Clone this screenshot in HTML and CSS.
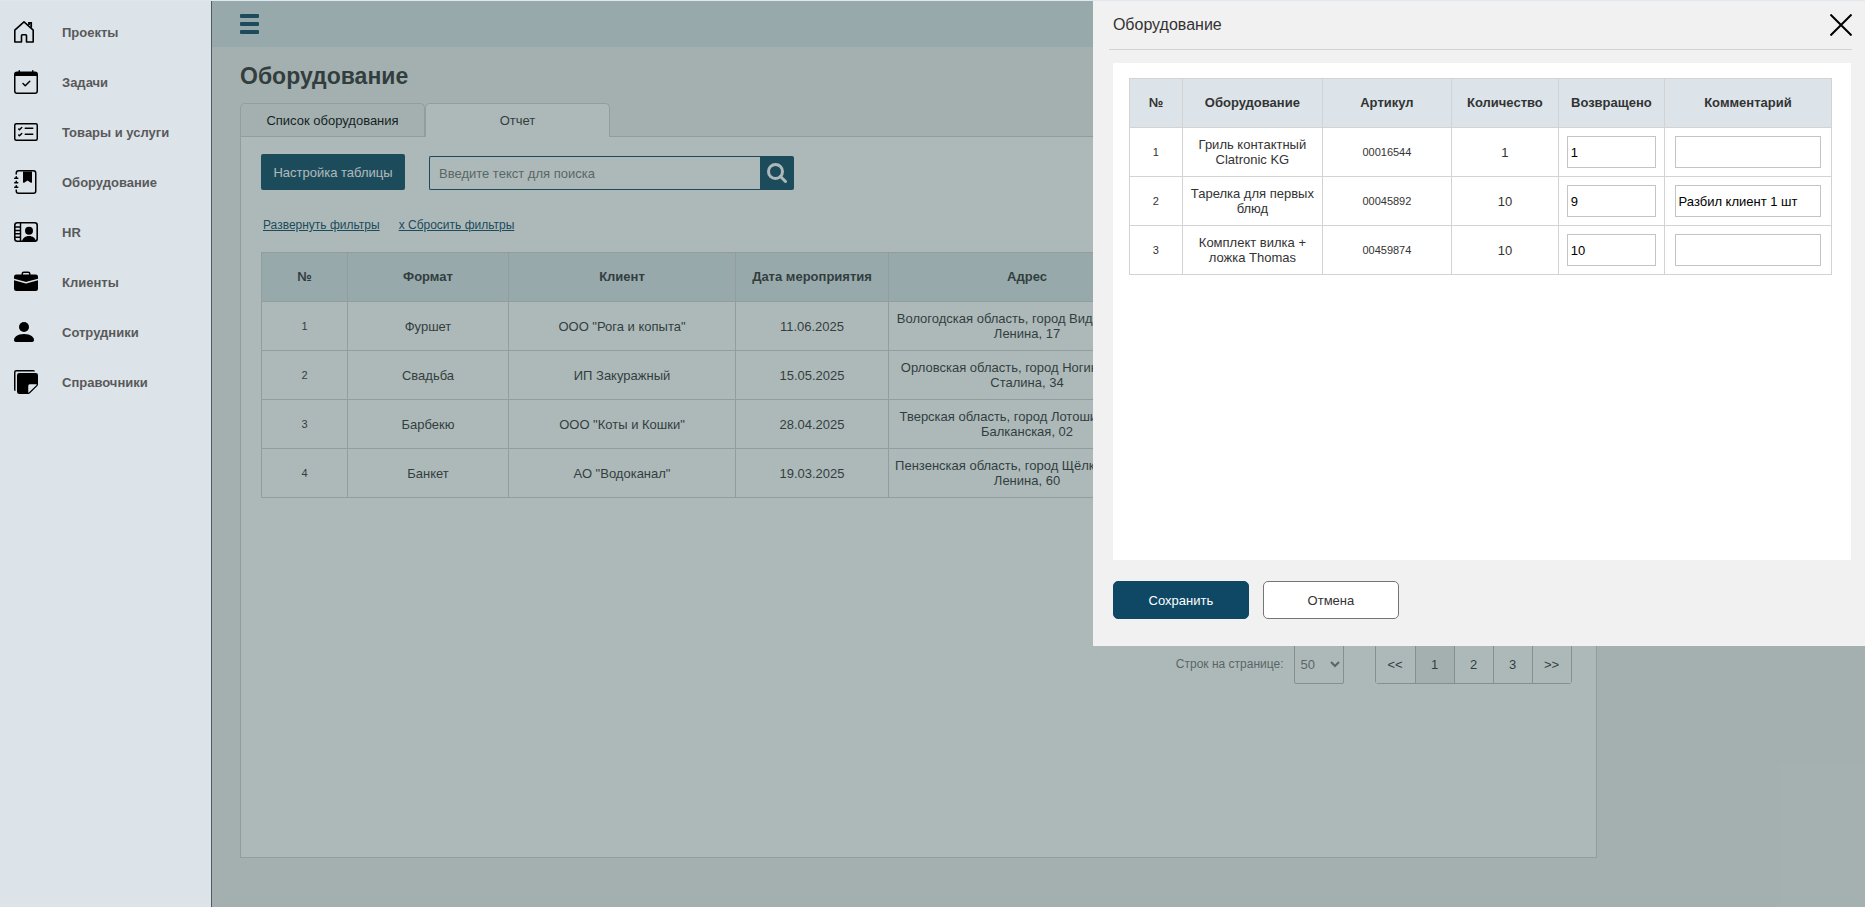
FILE: index.html
```html
<!DOCTYPE html>
<html lang="ru">
<head>
    <meta charset="UTF-8">
    <meta name="viewport" content="width=device-width, initial-scale=1.0">
    <title>Оборудование</title>
    <link rel="stylesheet" href="styles.css">
</head>
<body>
    <nav class="sidebar">
        <a href="#" class="menu-item">
            <svg class="icon" width="24" height="24" viewBox="0 0 24 24" fill="none" stroke="#000" stroke-width="1.6"><path d="M.8 10.2V22h6.7v-6.4c0-.5.3-.8.8-.8h3.4c.5 0 .8.3.8.8V22h6.7V10.2L10 1.8z" stroke-linejoin="round"/><path d="M15 5V2.8h2.2v5" stroke-width="1.8"/></svg>
            <span>Проекты</span>
        </a>
        <a href="#" class="menu-item">
            <svg class="icon" width="24" height="24" viewBox="0 0 16 16"><path d="M10.854 7.146a.5.5 0 0 1 0 .708l-3 3a.5.5 0 0 1-.708 0l-1.5-1.5a.5.5 0 1 1 .708-.708L7.5 9.793l2.646-2.647a.5.5 0 0 1 .708 0"/><path d="M3.5 0a.5.5 0 0 1 .5.5V1h8V.5a.5.5 0 0 1 1 0V1h1a2 2 0 0 1 2 2v11a2 2 0 0 1-2 2H2a2 2 0 0 1-2-2V3a2 2 0 0 1 2-2h1V.5a.5.5 0 0 1 .5-.5M1 4v10a1 1 0 0 0 1 1h12a1 1 0 0 0 1-1V4z"/></svg>
            <span>Задачи</span>
        </a>
        <a href="#" class="menu-item">
            <svg class="icon" width="24" height="24" viewBox="0 0 16 16"><path d="M14.5 3a.5.5 0 0 1 .5.5v9a.5.5 0 0 1-.5.5h-13a.5.5 0 0 1-.5-.5v-9a.5.5 0 0 1 .5-.5zm-13-1A1.500 1.500 0 0 0 0 3.500v9A1.500 1.500 0 0 0 1.500 14h13a1.500 1.500 0 0 0 1.500-1.500v-9A1.500 1.500 0 0 0 14.500 2z"/><path d="M7 5.500a.5.5 0 0 1 .5-.5h5a.5.5 0 0 1 0 1h-5a.5.5 0 0 1-.5-.5m-1.496-.854a.5.5 0 0 1 0 .708l-1.500 1.500a.5.5 0 0 1-.708 0l-.5-.5a.5.5 0 1 1 .708-.708l.146.147 1.146-1.147a.5.5 0 0 1 .708 0M7 9.500a.5.5 0 0 1 .5-.5h5a.5.5 0 0 1 0 1h-5a.5.5 0 0 1-.5-.5m-1.496-.854a.5.5 0 0 1 0 .708l-1.500 1.500a.5.5 0 0 1-.708 0l-.5-.5a.5.5 0 0 1 .708-.708l.146.147 1.146-1.147a.5.5 0 0 1 .708 0"/></svg>
            <span>Товары и услуги</span>
        </a>
        <a href="#" class="menu-item">
            <svg class="icon" width="24" height="24" viewBox="0 0 16 16"><path fill-rule="evenodd" d="M6 1h6v7a.5.5 0 0 1-.757.429L9 7.083 6.757 8.430A.5.5 0 0 1 6 8z"/><path d="M3 0h10a2 2 0 0 1 2 2v12a2 2 0 0 1-2 2H3a2 2 0 0 1-2-2v-1h1v1a1 1 0 0 0 1 1h10a1 1 0 0 0 1-1V2a1 1 0 0 0-1-1H3a1 1 0 0 0-1 1v1H1V2a2 2 0 0 1 2-2"/><path d="M1 5v-.5a.5.5 0 0 1 1 0V5h.5a.5.5 0 0 1 0 1h-2a.5.5 0 0 1 0-1zm0 3v-.5a.5.5 0 0 1 1 0V8h.5a.5.5 0 0 1 0 1h-2a.5.5 0 0 1 0-1zm0 3v-.5a.5.5 0 0 1 1 0v.5h.5a.5.5 0 0 1 0 1h-2a.5.5 0 0 1 0-1z"/></svg>
            <span>Оборудование</span>
        </a>
        <a href="#" class="menu-item">
            <svg class="icon" width="24" height="24" viewBox="0 0 24 24"><rect x=".8" y="2.8" width="22.400" height="18.400" rx="2.500" fill="none" stroke="#000" stroke-width="1.600"/><path d="M6.500 3v18M1 7h5.500M1 10.400h5.500M1 13.800h5.500M1 17.200h5.500" fill="none" stroke="#000" stroke-width="1.500"/><circle cx="15" cy="10.800" r="4"/><path d="M8 21.500c.5-3.300 3.200-5.500 7-5.500s6.500 2.200 7 5.500z"/></svg>
            <span>HR</span>
        </a>
        <a href="#" class="menu-item">
            <svg class="icon" width="24" height="24" viewBox="0 0 16 16"><path d="M6.500 1A1.500 1.500 0 0 0 5 2.500V3H1.500A1.500 1.500 0 0 0 0 4.500v1.384l7.614 2.030a1.500 1.500 0 0 0 .772 0L16 5.884V4.500A1.500 1.500 0 0 0 14.500 3H11v-.5A1.500 1.500 0 0 0 9.500 1zm0 1h3a.5.5 0 0 1 .5.5V3H6v-.5a.5.5 0 0 1 .5-.5"/><path d="M0 12.500A1.500 1.500 0 0 0 1.500 14h13a1.500 1.500 0 0 0 1.500-1.500V6.850L8.129 8.950a.5.5 0 0 1-.258 0L0 6.850z"/></svg>
            <span>Клиенты</span>
        </a>
        <a href="#" class="menu-item">
            <svg class="icon" width="24" height="24" viewBox="0 0 24 24"><circle cx="10" cy="7" r="5"/><path d="M2 22c-1.300 0-2-.7-2-2 0-2.600 3-6 10-6s10 3.400 10 6c0 1.300-.7 2-2 2z"/></svg>
            <span>Сотрудники</span>
        </a>
        <a href="#" class="menu-item">
            <svg class="icon" width="24" height="24" viewBox="0 0 16 16"><path d="M0 1.500V13a1 1 0 0 0 1 1V1.500a.5.5 0 0 1 .5-.5H14a1 1 0 0 0-1-1H1.500A1.500 1.500 0 0 0 0 1.500"/><path d="M3.500 2A1.500 1.500 0 0 0 2 3.500v11A1.500 1.500 0 0 0 3.500 16h6.086a1.500 1.500 0 0 0 1.060-.44l4.915-4.914A1.500 1.500 0 0 0 16 9.586V3.500A1.500 1.500 0 0 0 14.500 2zm6 8.500a1 1 0 0 1 1-1h4.396a.25.25 0 0 1 .177.427l-5.146 5.146a.25.25 0 0 1-.427-.177z"/></svg>
            <span>Справочники</span>
        </a>
    </nav>

    <div class="content">
        <header class="topbar">
            <button class="burger" aria-label="Меню"><i></i><i></i><i></i></button>
        </header>

        <main class="page">
            <h1>Оборудование</h1>
            <div class="tabs">
                <button class="tab">Список оборудования</button>
                <button class="tab active">Отчет</button>
            </div>
            <div class="panel">
                <div class="tools">
                    <button class="btn-settings">Настройка таблицы</button>
                    <form class="search">
                        <input type="text" placeholder="Введите текст для поиска" aria-label="Поиск">
                        <button type="button" aria-label="Найти">
                            <svg width="20" height="20" viewBox="0 0 20 20" fill="none" stroke="#fff"><circle cx="8.500" cy="8.500" r="7" stroke-width="3"/><path d="M13.500 13.500l5 5" stroke-width="3" stroke-linecap="round"/></svg>
                        </button>
                    </form>
                </div>
                <div class="filters">
                    <a href="#">Развернуть фильтры</a>
                    <a href="#">x Сбросить фильтры</a>
                </div>
                <table class="table report">
                    <colgroup>
                        <col class="r-num"><col class="r-format"><col class="r-client"><col class="r-date"><col class="r-address"><col>
                    </colgroup>
                    <thead>
                        <tr><th>№</th><th>Формат</th><th>Клиент</th><th>Дата мероприятия</th><th>Адрес</th><th></th></tr>
                    </thead>
                    <tbody>
                        <tr><td class="small">1</td><td>Фуршет</td><td>ООО "Рога и копыта"</td><td>11.06.2025</td><td>Вологодская область, город Видное, улица<br>Ленина, 17</td><td></td></tr>
                        <tr><td class="small">2</td><td>Свадьба</td><td>ИП Закуражный</td><td>15.05.2025</td><td>Орловская область, город Ногинск, улица<br>Сталина, 34</td><td></td></tr>
                        <tr><td class="small">3</td><td>Барбекю</td><td>ООО "Коты и Кошки"</td><td>28.04.2025</td><td>Тверская область, город Лотошино, улица<br>Балканская, 02</td><td></td></tr>
                        <tr><td class="small">4</td><td>Банкет</td><td>АО "Водоканал"</td><td>19.03.2025</td><td>Пензенская область, город Щёлково, улица<br>Ленина, 60</td><td></td></tr>
                    </tbody>
                </table>
                <div class="paging">
                    <label for="rows">Строк на странице:</label>
                    <select id="rows"><option>50</option><option>100</option></select>
                    <div class="pages">
                        <button>&lt;&lt;</button>
                        <button class="current">1</button>
                        <button>2</button>
                        <button>3</button>
                        <button>&gt;&gt;</button>
                    </div>
                </div>
            </div>
        </main>
        <div class="overlay"></div>
    </div>

    <section class="modal" role="dialog" aria-labelledby="modal-title">
        <div class="modal-header">
            <h2 id="modal-title">Оборудование</h2>
            <button class="close" aria-label="Закрыть">
                <svg width="22" height="22" viewBox="0 0 22 22" stroke="#000" stroke-width="2"><path d="M.5.5l21 21M21.500.5l-21 21"/></svg>
            </button>
        </div>
        <div class="modal-body">
            <table class="table">
                <colgroup>
                    <col class="m-num"><col class="m-name"><col class="m-code"><col class="m-count"><col class="m-back"><col>
                </colgroup>
                <thead>
                    <tr><th>№</th><th>Оборудование</th><th>Артикул</th><th>Количество</th><th>Возвращено</th><th>Комментарий</th></tr>
                </thead>
                <tbody>
                    <tr>
                        <td class="small">1</td><td>Гриль контактный Clatronic KG</td><td class="small">00016544</td><td>1</td>
                        <td><input type="text" value="1" aria-label="Возвращено"></td>
                        <td><input type="text" value="" aria-label="Комментарий"></td>
                    </tr>
                    <tr>
                        <td class="small">2</td><td>Тарелка для первых блюд</td><td class="small">00045892</td><td>10</td>
                        <td><input type="text" value="9" aria-label="Возвращено"></td>
                        <td><input type="text" value="Разбил клиент 1 шт" aria-label="Комментарий"></td>
                    </tr>
                    <tr>
                        <td class="small">3</td><td>Комплект вилка + ложка Thomas</td><td class="small">00459874</td><td>10</td>
                        <td><input type="text" value="10" aria-label="Возвращено"></td>
                        <td><input type="text" value="" aria-label="Комментарий"></td>
                    </tr>
                </tbody>
            </table>
        </div>
        <div class="modal-footer">
            <button class="btn save">Сохранить</button>
            <button class="btn cancel">Отмена</button>
        </div>
    </section>
</body>
</html>
```

FILE: styles.css
```css
* {
    box-sizing: border-box;
}
body {
    margin: 0;
    min-height: 100vh;
    display: flex;
    border-top: 1px solid #dfe7ef;
    background: #f1f1f1;
    color: #333;
    font-family: Arial, "Liberation Sans", sans-serif;
    font-size: 13px;
}
button, input, select {
    font-family: inherit;
    font-size: 13px;
    color: #333;
}
button {
    cursor: pointer;
    padding: 0;
}

/* боковое меню */
.sidebar {
    width: 212px;
    flex-shrink: 0;
    padding-top: 6px;
    background: #dce4ea;
    border-right: 1px solid #4f5b5d;
}
.menu-item {
    display: flex;
    align-items: center;
    gap: 24px;
    height: 50px;
    padding-left: 14px;
    color: #595959;
    font-weight: bold;
    text-decoration: none;
}
.icon {
    flex-shrink: 0;
}

/* основная часть */
.content {
    flex: 1;
    min-width: 0;
    position: relative;
}
.overlay {
    position: absolute;
    inset: 0;
    background: rgba(51, 80, 80, 0.4);
}
.topbar {
    display: flex;
    align-items: center;
    height: 46px;
    padding-left: 28px;
    background: #dce4ea;
}
.burger {
    display: grid;
    gap: 4px;
    width: 19px;
    background: none;
    border: none;
}
.burger i {
    height: 4px;
    background: #0e4865;
    border-radius: 1px;
}
.page {
    width: 84%;
    padding: 15px 4px 48px 28px;
}
h1 {
    margin: 0 0 13px;
    font-size: 23px;
    line-height: 28px;
}
.tabs {
    display: flex;
}
.tab {
    width: 185px;
    height: 33px;
    border: 1px solid #d3d3d3;
    border-bottom: none;
    border-radius: 5px 5px 0 0;
    background: #f1f1f1;
    color: #000;
}
.tab.active {
    position: relative;
    height: 34px;
    margin-bottom: -1px;
    background: #fff;
    color: #333;
}
.panel {
    min-height: 722px;
    padding: 17px 20px;
    background: #fff;
    border: 1px solid #d3d3d3;
}
.tools {
    display: flex;
    align-items: flex-end;
    gap: 24px;
}
.btn-settings {
    width: 144px;
    height: 36px;
    background: #0e4865;
    color: #fff;
    border: none;
    border-radius: 2px;
}
.search {
    display: flex;
}
.search input {
    width: 331px;
    height: 34px;
    padding: 0 9px;
    border: 1px solid #0e4865;
    border-right: none;
    border-radius: 2px 0 0 2px;
    background: #fff;
}
.search input::placeholder {
    color: #757575;
}
.search button {
    display: flex;
    align-items: center;
    justify-content: center;
    width: 34px;
    height: 34px;
    background: #0e4865;
    border: none;
    border-radius: 0 2px 2px 0;
}
.filters {
    display: flex;
    gap: 19px;
    padding: 27px 2px 19px;
    font-size: 12px;
    line-height: 16px;
}
.filters a {
    color: #0e4865;
}

/* таблицы */
.table {
    width: 100%;
    table-layout: fixed;
    border-collapse: collapse;
    text-align: center;
    line-height: 15px;
}
.table th, .table td {
    height: 49px;
    padding: 0 5px;
    border: 1px solid #d3d3d3;
}
.table th {
    padding-bottom: 1px;
    background: #dce4ea;
}
.table .small {
    font-size: 11px;
}
.r-num { width: 86px; }
.r-format { width: 161px; }
.r-client { width: 227px; }
.r-date { width: 153px; }
.r-address { width: 277px; }

.paging {
    display: flex;
    align-items: center;
    justify-content: flex-end;
    padding: 146px 4px 0;
    color: #757575;
    font-size: 12px;
}
.paging select {
    width: 50px;
    height: 40px;
    margin: 0 31px 0 10px;
    padding: 0 2px;
    background: #fff;
    color: #757575;
    border: 1px solid #bbb;
    border-radius: 2px;
}
.pages {
    display: flex;
    border: 1px solid #bbb;
    border-radius: 3px;
}
.pages button {
    width: 39px;
    height: 38px;
    background: #fff;
    border: none;
}
.pages button + button {
    border-left: 1px solid #bbb;
}
.pages .current {
    background: #f1f1f1;
}

/* модальное окно */
.modal {
    position: absolute;
    top: 1px;
    right: 0;
    width: 41.4%;
    padding: 0 13px 27px 16px;
    background: #f1f1f1;
}
.modal-header {
    display: flex;
    align-items: center;
    justify-content: space-between;
    height: 49px;
    padding-left: 4px;
    border-bottom: 1px solid #d3d3d3;
}
.modal-header h2 {
    margin: 0;
    font-size: 16px;
    font-weight: normal;
}
.close {
    display: flex;
    background: none;
    border: none;
}
.modal-body {
    min-height: 497px;
    margin: 13px 1px 21px 4px;
    padding: 15px 19px 15px 16px;
    background: #fff;
}
.m-num { width: 53px; }
.m-name { width: 140px; }
.m-code { width: 129px; }
.m-count { width: 107px; }
.m-back { width: 106px; }

.modal-body input {
    display: block;
    width: 94%;
    height: 32px;
    margin: 0 auto;
    padding: 0 3px;
    border: 1px solid #c4c4c4;
    color: #000;
}
.modal-footer {
    display: flex;
    gap: 14px;
    padding-left: 4px;
}
.btn {
    width: 136px;
    height: 38px;
    border: 1px solid #757575;
    border-radius: 5px;
    background: #fff;
}
.btn.save {
    background: #0e4865;
    border-color: #0e4865;
    color: #fff;
}
```
